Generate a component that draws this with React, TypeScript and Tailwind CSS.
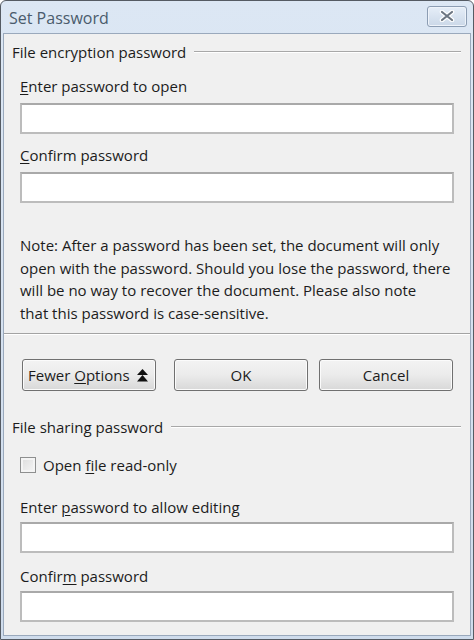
import React from "react";

const font = { fontFamily: '"Open Sans", "Noto Sans", sans-serif' };

function Label({ before, u, after }: { before?: string; u: string; after: string }) {
    return (
        <span>
            {before}
            <span className="underline underline-offset-2">{u}</span>
            {after}
        </span>
    );
}

function Field() {
    return <div className="ml-[16px] w-[434px] h-[31px] bg-white border-2 border-[#bcbcbc] border-t-[#a9a9a9]" />;
}

function SectionHeader({ title }: { title: string }) {
    return (
        <div className="flex items-center pl-[8px] pr-[9px] h-[22px]">
            <span className="whitespace-nowrap">{title}</span>
            <div className="flex-1 ml-[8px] border-t border-[#a8a8a8] border-b border-b-white" />
        </div>
    );
}

function WinButton({ children, className }: { children: React.ReactNode; className?: string }) {
    return (
        <div className={`w-[134px] h-[32px] rounded-[3px] border border-[#707070] bg-gradient-to-b from-[#f3f3f3] via-[#ebebeb] to-[#d8d8d8] shadow-[inset_0_0_0_1px_#fbfbfb] flex items-center justify-center ${className ?? ""}`}>
            {children}
        </div>
    );
}

export default function App() {
    return (
        <div style={font} className="w-[474px] h-[640px] bg-white">
            <div className="w-[474px] h-[640px] flex flex-col border border-[#555b63] rounded-t-[6px] bg-gradient-to-b from-[#dce7f4] to-[#cfdcec] text-[15px] text-[#1c1c1c]">
                {/* title bar */}
                <div className="h-[32px] flex items-center justify-between pl-[8px] pr-[6px]">
                    <span className="text-[16px] text-[#4a5b6c] mt-[1px]">Set Password</span>
                    <div className="w-[40px] h-[21px] -mt-[2px] rounded-[3px] border border-[#8c9db3] bg-gradient-to-b from-[#e6eef8] to-[#cbd8e8] shadow-[inset_0_0_0_1px_#eef3fa] flex items-center justify-center">
                        <svg width="16" height="12" viewBox="0 0 16 12">
                            <path d="M3 2 L13 10 M13 2 L3 10" stroke="#ffffff" strokeWidth="4.5" strokeLinecap="round" />
                            <path d="M3 2 L13 10 M13 2 L3 10" stroke="#6d7682" strokeWidth="2.2" strokeLinecap="round" />
                        </svg>
                    </div>
                </div>

                {/* client area */}
                <div className="flex-1 mx-[2px] mb-[3px] bg-[#f0f0f0] border border-[#9aa9bc] flex flex-col">
                    <div className="mt-[7px]">
                        <SectionHeader title="File encryption password" />
                    </div>
                    <div className="mt-[12px] ml-[16px] h-[22px] leading-[22px]">
                        <Label u="E" after="nter password to open" />
                    </div>
                    <div className="mt-[6px]"><Field /></div>
                    <div className="mt-[10px] ml-[16px] h-[22px] leading-[22px]">
                        <Label u="C" after="onfirm password" />
                    </div>
                    <div className="mt-[6px]"><Field /></div>

                    <p className="mt-[31px] ml-[16px] w-[450px] leading-[22.6px] whitespace-nowrap">
                        Note: After a password has been set, the document will only<br />
                        open with the password. Should you lose the password, there<br />
                        will be no way to recover the document. Please also note<br />
                        that this password is case-sensitive.
                    </p>

                    <div className="mt-[9px] border-t border-[#a3a3a3] border-b border-b-white" />

                    <div className="mt-[24px] flex pl-[18px]">
                        <WinButton className="justify-start pl-[5px] gap-[7px]">
                            <Label before="Fewer " u="O" after="ptions" />
                            <svg width="11" height="13" viewBox="0 0 11 13">
                                <path d="M5.5 0 L11 6 L0 6 Z" fill="#111" />
                                <path d="M5.5 6 L11 12.5 L0 12.5 Z" fill="#111" />
                            </svg>
                        </WinButton>
                        <WinButton className="ml-[18px]">OK</WinButton>
                        <WinButton className="ml-[11px]">Cancel</WinButton>
                    </div>

                    <div className="mt-[25px]">
                        <SectionHeader title="File sharing password" />
                    </div>
                    <div className="mt-[16px] ml-[16px] h-[22px] flex items-center gap-[7px]">
                        <div className="w-[16px] h-[16px] border border-[#8e8f8f] bg-gradient-to-br from-[#dcdcdc] to-[#f6f6f6] shadow-[inset_0_0_0_2px_#f4f4f4]" />
                        <Label before="Open " u="f" after="ile read-only" />
                    </div>
                    <div className="mt-[20px] ml-[16px] h-[22px] leading-[22px]">
                        <Label before="Enter " u="p" after="assword to allow editing" />
                    </div>
                    <div className="mt-[4px]"><Field /></div>
                    <div className="mt-[12px] ml-[16px] h-[22px] leading-[22px]">
                        <Label before="Confir" u="m" after=" password" />
                    </div>
                    <div className="mt-[4px]"><Field /></div>
                </div>
            </div>
        </div>
    );
}
